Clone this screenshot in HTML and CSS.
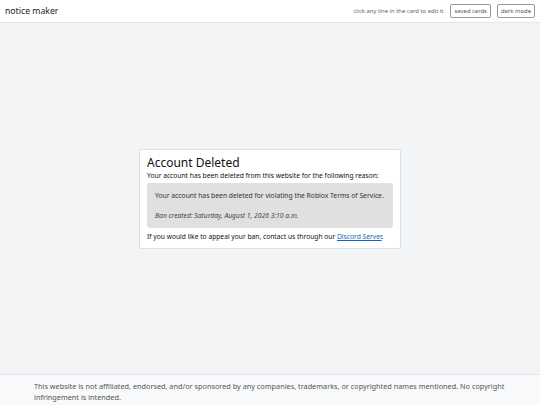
FILE: index.html
```html
<!DOCTYPE html>
<html lang="en">
<head>
<meta charset="utf-8">
<title>notice maker</title>
<link rel="stylesheet" href="styles.css">
</head>
<body>
<header class="topbar">
  <div class="brand">notice maker</div>
  <div class="tools">
    <span class="hint">click any line in the card to edit it</span>
    <button class="btn">saved cards</button>
    <button class="btn">dark mode</button>
  </div>
</header>
<main class="stage">
  <section class="card">
    <h1 class="card-title">Account Deleted</h1>
    <p class="card-line">Your account has been deleted from this website for the following reason:</p>
    <div class="reason">
      <p class="reason-text">Your account has been deleted for violating the Roblox Terms of Service.</p>
      <p class="reason-date">Ban created: Saturday, August 1, 2026 3:10 a.m.</p>
    </div>
    <p class="card-line">If you would like to appeal your ban, contact us through our <a href="#" class="link">Discord Server</a>.</p>
  </section>
</main>
<footer class="footer">
  <p>This website is not affiliated, endorsed, and/or sponsored by any companies, trademarks, or copyrighted names mentioned. No copyright infringement is intended.</p>
  <p>© 2026 Ironit</p>
</footer>
</body>
</html>
```

FILE: styles.css
```css
* { box-sizing: border-box; }
html, body { margin: 0; padding: 0; }
body {
  font-family: "Noto Sans", "Open Sans", sans-serif;
  color: #212529;
  background: #f3f4f6;
  height: 405px;
  display: flex;
  flex-direction: column;
  overflow: hidden;
}
.topbar {
  height: 23px;
  flex: none;
  background: #fff;
  border-bottom: 1px solid #e3e5e8;
  display: flex;
  align-items: center;
  justify-content: space-between;
  padding: 0 5px;
}
.brand { font-size: 8.7px; color: #222; }
.tools { display: flex; align-items: center; gap: 6px; }
.hint { font-size: 5.9px; color: #666; margin-right: 1px; }
.btn {
  font-family: inherit;
  font-size: 5.9px;
  color: #555;
  background: #fff;
  border: 1px solid #999;
  border-radius: 2px;
  height: 14px;
  padding: 0 3px;
  line-height: 12px;
}
.stage {
  flex: 1;
  display: flex;
  align-items: center;
  justify-content: center;
}
.card {
  width: 262px;
  background: #fff;
  border: 1px solid #dcdfe3;
  border-radius: 2px;
  padding: 5px 7px 7px;
}
.card-title {
  margin: 0;
  font-size: 12px;
  font-weight: 400;
  line-height: 16px;
  color: #111;
}
.card-line {
  margin: 0;
  font-size: 6.7px;
  line-height: 9px;
  color: #111;
}
.reason {
  background: #e0e0e0;
  border-radius: 3px;
  margin: 3px 0 4px;
  padding: 8px 8px 8px;
}
.reason p {
  margin: 0;
  font-size: 6.75px;
  line-height: 9px;
  color: #333;
}
.reason p.reason-date {
  font-style: italic;
  margin-top: 11px;
  color: #444;
}
.link { color: #1565c0; text-decoration: underline; }
.footer {
  flex: none;
  height: 31px;
  background: #f8f9fa;
  border-top: 1px solid #e3e5e8;
  padding: 6px 34px 0;
  overflow: hidden;
}
.footer p {
  margin: 0;
  font-size: 7.3px;
  line-height: 11px;
  color: #555;
}
```
